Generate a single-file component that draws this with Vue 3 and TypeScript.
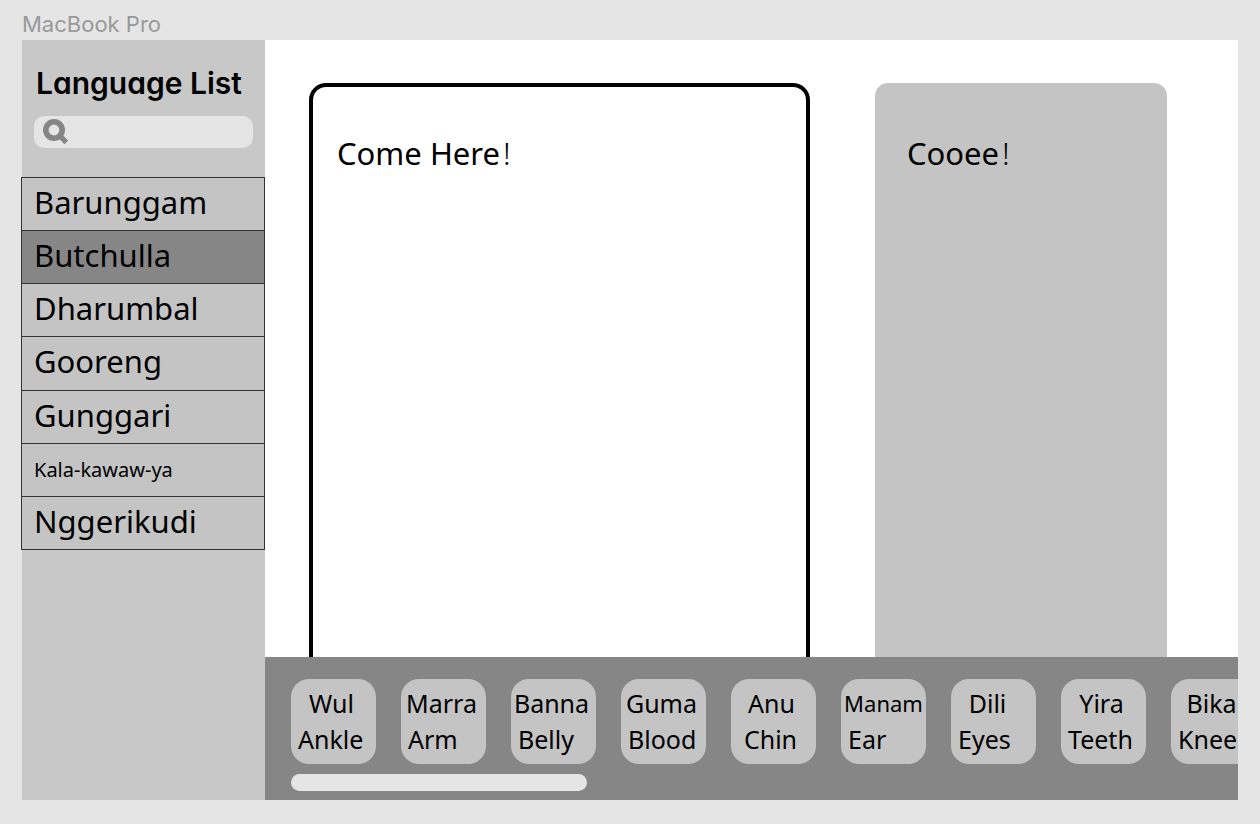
<script setup lang="ts">
import { ref } from 'vue'

interface Language {
  name: string
  compact?: boolean
}

interface Word {
  native: string
  english: string
  compact?: boolean
  lean?: boolean
  centered?: boolean
}

const languages: Language[] = [
  { name: 'Barunggam' },
  { name: 'Butchulla' },
  { name: 'Dharumbal' },
  { name: 'Gooreng' },
  { name: 'Gunggari' },
  { name: 'Kala-kawaw-ya', compact: true },
  { name: 'Nggerikudi' },
]

const words: Word[] = [
  { native: 'Wul', english: 'Ankle' },
  { native: 'Marra', english: 'Arm' },
  { native: 'Banna', english: 'Belly' },
  { native: 'Guma', english: 'Blood' },
  { native: 'Anu', english: 'Chin', centered: true },
  { native: 'Manam', english: 'Ear', compact: true },
  { native: 'Dili', english: 'Eyes', lean: true },
  { native: 'Yira', english: 'Teeth' },
  { native: 'Bika', english: 'Knee' },
]

const selected = ref('Butchulla')
const query = ref('')
</script>

<template>
  <div class="page">
    <header class="frame-name">MacBook Pro</header>
    <div class="frame">
      <aside class="sidebar">
        <h1 class="title">Language List</h1>
        <label class="search">
          <svg class="search-icon" viewBox="0 0 26 26" aria-hidden="true">
            <circle cx="11" cy="11" r="8.2" fill="none" stroke="#868686" stroke-width="5.6" />
            <path d="M16 16L23.3 23.3" fill="none" stroke="#868686" stroke-width="5.2" />
          </svg>
          <input v-model="query" class="search-input" type="text" aria-label="Search languages" />
        </label>
        <ul class="languages">
          <li v-for="language in languages" :key="language.name">
            <button
              type="button"
              class="language"
              :class="{ active: language.name === selected, compact: language.compact }"
              @click="selected = language.name"
            >
              {{ language.name }}
            </button>
          </li>
        </ul>
      </aside>

      <main class="content">
        <section class="stage">
          <article class="panel outlined">
            <h2 class="phrase">Come Here<span class="mark">!</span></h2>
          </article>
          <article class="panel filled">
            <h2 class="phrase">Cooee<span class="mark">!</span></h2>
          </article>
        </section>

        <section class="dock">
          <div class="words">
            <button
              v-for="word in words"
              :key="word.english"
              type="button"
              class="word"
              :class="{ compact: word.compact, lean: word.lean, centered: word.centered }"
            >
              <span class="native">{{ word.native }}</span>
              <span class="english">{{ word.english }}</span>
            </button>
          </div>
          <div class="scroll-thumb"></div>
        </section>
      </main>
    </div>
  </div>
</template>

<style>
body {
  margin: 0;
  background: #e5e5e5;
}
</style>

<style scoped>
.page {
  box-sizing: border-box;
  display: flex;
  flex-direction: column;
  min-height: 100vh;
  padding: 0 22px 24px;
  background: #e5e5e5;
  color: #000;
  font-family: "Noto Sans", "Open Sans", sans-serif;
}

.frame-name {
  height: 40px;
  line-height: 48px;
  box-sizing: border-box;
  color: #999;
  font-family: Inter, sans-serif;
  font-size: 22px;
}

.frame {
  flex: 1;
  display: flex;
  background: #fff;
}

.sidebar {
  flex: none;
  width: 243px;
  background: #c8c8c8;
}

.title {
  margin: 25px 0 15px 14px;
  font-family: Inter, sans-serif;
  font-size: 30px;
  font-weight: 600;
  font-feature-settings: "cv11";
  line-height: 36px;
  white-space: nowrap;
}

.search {
  display: flex;
  align-items: center;
  height: 32px;
  margin: 0 12px 29px;
  padding-left: 9px;
  border-radius: 10px;
  background: #e5e5e5;
}

.search-icon {
  flex: none;
  width: 26px;
  height: 26px;
}

.search-input {
  flex: 1;
  min-width: 0;
  padding: 0 8px;
  border: 0;
  outline: 0;
  background: transparent;
  font: inherit;
  font-size: 18px;
}

.languages {
  display: grid;
  grid-auto-rows: 1fr;
  box-sizing: border-box;
  height: 373px;
  margin: 0 0 0 -1px;
  padding: 0;
  border: 1px solid #333;
  border-top: 0;
  list-style: none;
}

.languages li {
  display: flex;
  border-top: 1px solid #333;
}

.language {
  flex: 1;
  padding: 0 12px 4px;
  border: 0;
  background: #c4c4c4;
  color: #000;
  font-family: inherit;
  font-size: 31px;
  line-height: 42px;
  text-align: left;
  cursor: pointer;
}

.language.compact {
  padding-bottom: 0;
  font-size: 20px;
}

.language.active {
  background: #868686;
}

.content {
  flex: 1;
  min-width: 0;
  display: flex;
  flex-direction: column;
}

.stage {
  flex: 1;
  display: grid;
  grid-template-columns: 501fr 292fr;
  gap: 65px;
  padding: 43px 71px 0 44px;
}

.panel {
  box-sizing: border-box;
}

.outlined {
  padding: 45px 24px 0;
  border: 4px solid #000;
  border-bottom: 0;
  border-radius: 17px 17px 0 0;
}

.filled {
  padding: 49px 32px 0;
  border-radius: 13px 13px 0 0;
  background: #c4c4c4;
}

.phrase {
  margin: 0;
  font-size: 31px;
  font-weight: 400;
  line-height: 42px;
}

.mark {
  margin-left: 3px;
  font-weight: 300;
}

.dock {
  box-sizing: border-box;
  height: 143px;
  padding: 22px 0 0 26px;
  overflow: hidden;
  background: #868686;
}

.words {
  display: flex;
  gap: 25px;
}

.word {
  flex: none;
  display: flex;
  flex-direction: column;
  justify-content: center;
  width: 85px;
  height: 85px;
  padding: 0 0 2px;
  border: 0;
  border-radius: 18px;
  background: #c4c4c4;
  color: #000;
  font-family: inherit;
  font-size: 25px;
  line-height: 36px;
  white-space: nowrap;
  cursor: pointer;
}

.native {
  align-self: center;
  padding-right: 4px;
}

.compact .native {
  padding-right: 0;
  font-size: 22px;
}

.lean .native {
  padding-right: 12px;
}

.english {
  padding-left: 7px;
  text-align: left;
}

.centered .english {
  padding: 0 6px 0 0;
  text-align: center;
}

.scroll-thumb {
  width: 296px;
  height: 17px;
  margin-top: 10px;
  border-radius: 9px;
  background: #e5e5e5;
}
</style>
